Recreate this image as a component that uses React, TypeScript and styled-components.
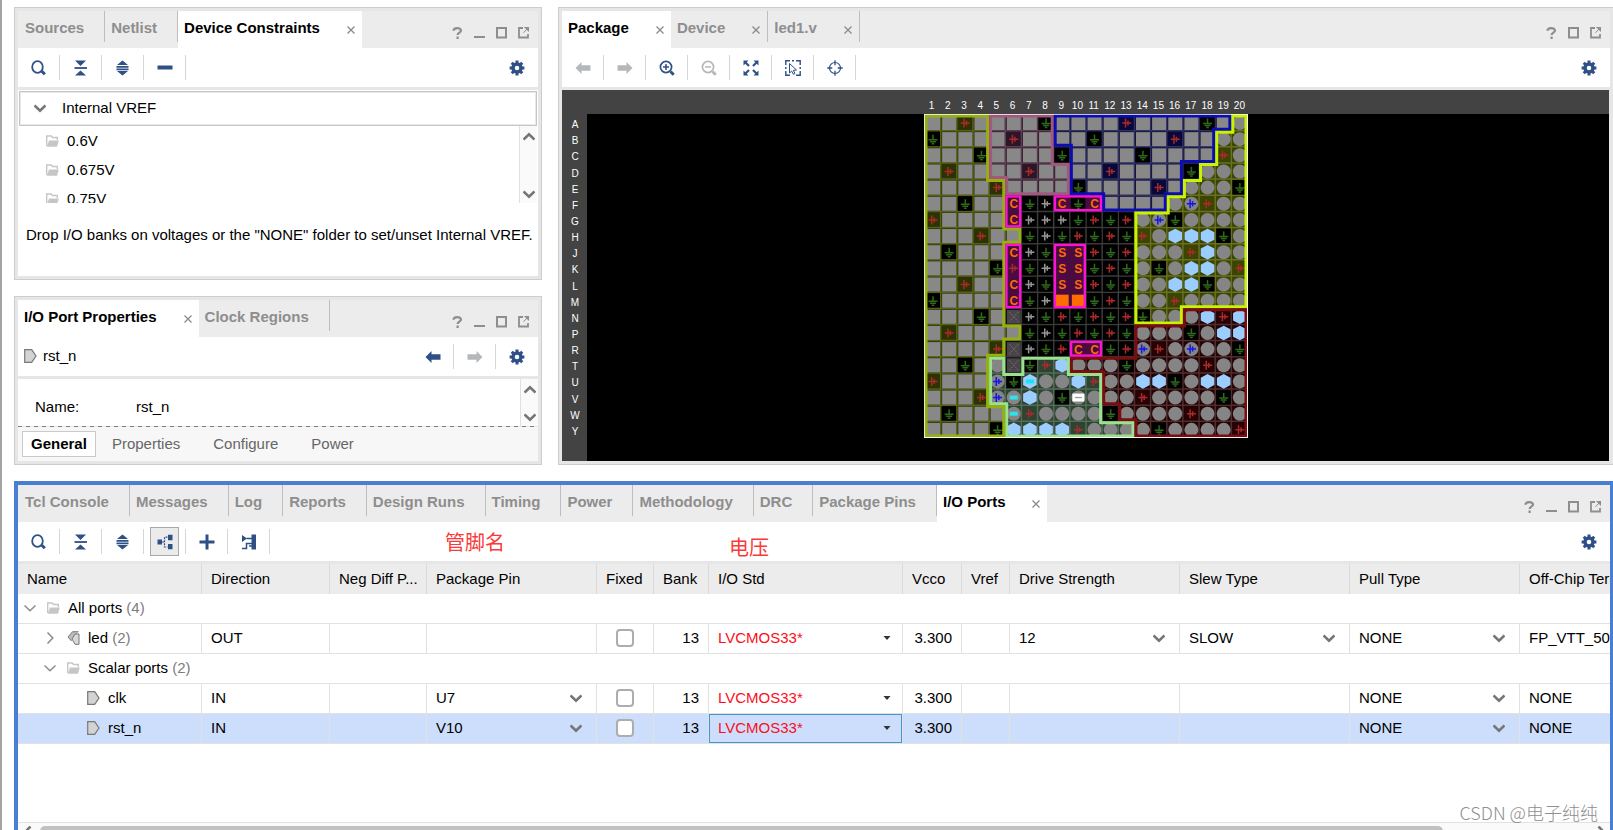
import React from "react";
import styled, { createGlobalStyle, css } from "styled-components";

const NAVY = "#2f4f87";
const GREY_ICON = "#b5b8bb";
const FONT = `"Liberation Sans", Arial, "Noto Sans CJK SC", sans-serif`;

const GlobalStyle = createGlobalStyle`
  *, *::before, *::after { box-sizing: border-box; }
  body {
    margin: 0;
    background: #fff;
    color: #000;
    font-family: ${FONT};
    font-size: 15px;
    line-height: 20px;
  }
  button, input, select {
    margin: 0;
    padding: 0;
    border: 0;
    background: none;
    color: inherit;
    font: inherit;
  }
  svg { display: block; flex: none; }
`;

/* ---------- page frame ---------- */

const Page = styled.main`
  height: 100vh;
  display: flex;
  flex-direction: column;
  gap: 16px;
  padding: 7px 0 0 12px;
  overflow: hidden;
  border-left: 2px solid #a3a3a3;
`;

const TopArea = styled.div`
  display: grid;
  grid-template-columns: minmax(480px, 528fr) 1055fr;
  gap: 16px;
`;

const LeftColumn = styled.div`
  display: flex;
  flex-direction: column;
  gap: 16px;
`;

const Panel = styled.section<{ $cut?: boolean }>`
  display: flex;
  flex-direction: column;
  min-width: 0;
  padding: 3px;
  border: 1px solid #cdcdcd;
  border-right-width: ${(p) => (p.$cut ? 0 : 1)}px;
  background: #e6e6e6;
`;

const ActivePanel = styled.section`
  position: relative;
  flex: 1;
  min-height: 0;
  display: flex;
  flex-direction: column;
  border: solid #4a7ed2;
  border-width: 4px 3px 0 4px;
  background: #fff;
`;

/* ---------- tab strip ---------- */

const Strip = styled.header`
  display: flex;
  align-items: flex-start;
  height: 37px;
  background: #ececec;
`;

const Tab = styled.div<{ $active?: boolean }>`
  display: flex;
  align-items: center;
  gap: 27px;
  height: 31px;
  padding: 2px 20px 0 6px;
  border-right: 1px solid #bdbdbd;
  color: #8e8e8e;
  &:first-child { padding-left: 7px; }
  ${(p) =>
    p.$active &&
    css`
      height: 37px;
      padding-bottom: 6px;
      border-right: 0;
      background: #fff;
      color: #000;
      &:first-child { padding-left: 6px; }
    `}
  &:has(button + button) {
    padding-right: 7px;
  }
`;

const TabLabel = styled.button`
  font-weight: bold;
  white-space: nowrap;
`;

const TabClose = styled.button`
  padding-top: 4px;
  color: #8a8a8a;
`;

const WindowControls = styled.div`
  display: flex;
  gap: 11px;
  margin: 16px 9px 0 auto;
  color: #8e8e8e;
`;

const ControlButton = styled.button`
  width: 11px;
  height: 12px;
`;

/* ---------- toolbars ---------- */

const Toolbar = styled.div`
  display: flex;
  align-items: center;
  height: 42px;
  border-bottom: 3px solid #e6e6e6;
  background: #fff;
`;

const ToolButton = styled.button<{ $last?: boolean }>`
  display: flex;
  align-items: center;
  justify-content: center;
  width: 42px;
  height: 25px;
  border-right: ${(p) => (p.$last ? 0 : 1)}px solid #d6d6d6;
`;

const PressedFace = styled.span`
  display: flex;
  flex: none;
  align-items: center;
  justify-content: center;
  width: 29px;
  height: 29px;
  border: 1px solid #a9a9a9;
  background: #ebebeb;
`;

const Spacer = styled.div`
  flex: 1;
`;

const ObjectName = styled.div`
  display: flex;
  align-items: center;
  gap: 6px;
  flex: 1;
  padding: 0 0 2px 6px;
`;

/* ---------- device constraints ---------- */

const ConstraintsBody = styled.div`
  height: 186px;
  padding: 1px;
  background: #fff;
`;

const VrefHeader = styled.button`
  display: flex;
  align-items: center;
  gap: 16px;
  width: 100%;
  height: 35px;
  padding: 0 14px 2px;
  border: 1px solid #c6c6c6;
  box-shadow: inset 0 0 0 1px #e9e9e9;
`;

const ScrollRow = styled.div<{ $height: number }>`
  display: flex;
  height: ${(p) => p.$height}px;
  overflow: hidden;
  background: #fff;
`;

const VoltageList = styled.ul`
  flex: 1;
  margin: 0;
  padding: 0;
  list-style: none;
`;

const VoltageItem = styled.li`
  display: flex;
  align-items: center;
  gap: 8px;
  height: 29px;
  padding-left: 27px;
`;

const ScrollGutter = styled.div`
  display: flex;
  flex-direction: column;
  align-items: center;
  justify-content: space-between;
  width: 18px;
  padding: 5px 0 3px;
  border-left: 1px solid #e0e0e0;
  background: #fafafa;
`;

const Hint = styled.p`
  margin: 22px 0 0;
  padding-left: 7px;
  white-space: nowrap;
`;

/* ---------- port properties ---------- */

const PropertyLine = styled.div`
  display: flex;
  flex: 1;
  align-items: center;
  padding: 9px 0 0 17px;
`;

const PropertyLabel = styled.span`
  width: 101px;
`;

const DashRule = styled.svg`
  width: 100%;
  height: 1px;
`;

const SubTabs = styled.div`
  display: flex;
  align-items: center;
  gap: 33px;
  height: 34px;
  padding-left: 4px;
  background: #f7f7f7;
  color: #666;
`;

const SubTab = styled.button<{ $active?: boolean }>`
  ${(p) =>
    p.$active &&
    css`
      height: 26px;
      margin-right: -17px;
      padding: 0 8px;
      border: 1px solid #c9c9c9;
      background: #fff;
      color: #000;
      font-weight: bold;
    `}
`;

/* ---------- package view ---------- */

const Canvas = styled.div`
  display: flex;
  flex: 1;
  flex-direction: column;
  margin-right: 1px;
  background: #434343;
  color: #fff;
`;

const ColumnRuler = styled.div`
  display: flex;
  justify-content: center;
  height: 24px;
  padding-top: 9px;
  font-size: 10px;
  line-height: 14px;
`;

const ColumnMarks = styled.div`
  display: grid;
  grid-template-columns: repeat(20, 1fr);
  width: 324px;
  text-align: center;
`;

const Stage = styled.div`
  display: flex;
  flex: 1;
`;

const RowRuler = styled.div`
  display: grid;
  grid-template-rows: repeat(20, 1fr);
  align-items: center;
  width: 25px;
  height: 326px;
  padding: 3px 0 0 1px;
  font-size: 10px;
  line-height: 12px;
  text-align: center;
`;

const Board = styled.div`
  display: flex;
  flex: 1;
  justify-content: center;
  padding-right: 25px;
  background: #000;
`;

/* ---------- port table ---------- */

const TableArea = styled.div`
  flex: 1;
  min-height: 0;
  overflow: hidden;
`;

const Table = styled.table`
  width: 100%;
  table-layout: fixed;
  border-collapse: separate;
  border-spacing: 0;
`;

const Th = styled.th`
  height: 30px;
  padding: 0 0 0 9px;
  overflow: hidden;
  border-right: 1px solid #dadada;
  background: #ececec;
  font-weight: normal;
  text-align: left;
  white-space: nowrap;
  &:last-child { border-right: 0; }
`;

const Tr = styled.tr<{ $selected?: boolean }>`
  background: ${(p) => (p.$selected ? "#cddefc" : "#fff")};
`;

const Td = styled.td<{ $align?: string; $focus?: boolean }>`
  height: 30px;
  padding: 0 ${(p) => (p.$align === "right" ? 9 : 0)}px 2px ${(p) => (p.$align ? 0 : 9)}px;
  overflow: hidden;
  border-right: 1px solid #e2e2e2;
  border-bottom: 1px solid #e2e2e2;
  text-align: ${(p) => p.$align ?? "left"};
  white-space: nowrap;
  ${(p) => p.$focus && css`box-shadow: inset 0 0 0 1px #4595d1;`}
  &:last-child { border-right: 0; }
`;

const TreeLabel = styled.div<{ $level: number; $leaf?: boolean }>`
  display: flex;
  align-items: center;
  margin-left: ${(p) => p.$level * 20 + (p.$leaf ? 20 : -3)}px;
  gap: 8px;
`;

const Twisty = styled.button`
  width: 12px;
  margin-right: 3px;
`;

const Count = styled.span`
  color: #7d7d7d;
`;

const Picker = styled.div<{ $arrow: number }>`
  display: grid;
  grid-template-columns: 1fr ${(p) => p.$arrow}px;
  align-items: center;
  svg {
    grid-area: 1 / 2;
    pointer-events: none;
  }
`;

const PickerSelect = styled.select<{ $red?: boolean }>`
  grid-area: 1 / 1 / 2 / 3;
  width: 100%;
  height: 20px;
  appearance: none;
  outline: none;
  color: ${(p) => (p.$red ? "#fb0d1b" : "#000")};
`;

const Check = styled.input`
  display: block;
  width: 18px;
  height: 18px;
  margin: 0 auto;
  appearance: none;
  border: 2px solid #adadad;
  border-radius: 4px;
  background: #fff;
`;

const HScroll = styled.div`
  display: flex;
  height: 8px;
  padding: 3px 3px 0 4px;
  overflow: hidden;
  border-top: 1px solid #e2e2e2;
  background: #fafafa;
`;

const Thumb = styled.div`
  flex: 1402;
  height: 12px;
  margin-left: 6px;
  border-radius: 5px;
  background: #c0c2c1;
`;

const ThumbRest = styled.div`
  flex: 152;
`;

const Note = styled.span<{ $left: number; $top: number }>`
  position: absolute;
  left: ${(p) => p.$left}px;
  top: ${(p) => p.$top}px;
  color: #fa3a3a;
  font-size: 20px;
  font-family: "Noto Sans CJK SC", sans-serif;
`;

const Watermark = styled.span`
  position: absolute;
  right: 12px;
  bottom: 8px;
  color: #8f8f8f;
  font-family: "Noto Sans CJK SC", sans-serif;
  font-size: 18px;
  font-weight: 300;
`;

/* ---------- icons ---------- */

const Svg = ({ size = 16, children }: { size?: number; children: React.ReactNode }) => (
  <svg width={size} height={size} viewBox={`0 0 ${size} ${size}`} fill="none" aria-hidden="true">
    {children}
  </svg>
);

const CloseIcon = () => (
  <Svg size={8}>
    <path d="M.5.5l7 7M7.5.5l-7 7" stroke="currentColor" strokeWidth="1.3" />
  </Svg>
);

const SearchIcon = () => (
  <Svg>
    <ellipse cx="6.500" cy="7" rx="5.300" ry="5.800" stroke={NAVY} strokeWidth="1.800" />
    <path d="M10.800 11.300l3 3" stroke={NAVY} strokeWidth="3" />
  </Svg>
);

const CollapseIcon = () => (
  <Svg>
    <path d="M2 .5h11L7.500 6zM2 15.500h11L7.500 10.500z" fill={NAVY} />
    <path d="M1.500 8H14" stroke={NAVY} strokeWidth="1.800" />
  </Svg>
);

const ExpandIcon = () => (
  <Svg>
    <path d="M7.500.5L13 5H2zM7.500 15.500L13 11H2z" fill={NAVY} />
    <path d="M1.500 6.800h12M1.500 9.300h12" stroke={NAVY} strokeWidth="1.700" />
  </Svg>
);

const MinusIcon = () => (
  <Svg>
    <path d="M.5 7.500h15" stroke={NAVY} strokeWidth="4" />
  </Svg>
);

const PlusIcon = () => (
  <Svg>
    <path d="M.5 8h15M8 .5v15" stroke={NAVY} strokeWidth="3" />
  </Svg>
);

const GearIcon = () => (
  <Svg>
    <circle cx="8" cy="8" r="4" stroke={NAVY} strokeWidth="3.400" />
    {[0, 45, 90, 135].map((a) => (
      <path key={a} d="M8 .6v3M8 12.400v3" stroke={NAVY} strokeWidth="3" transform={`rotate(${a} 8 8)`} />
    ))}
  </Svg>
);

const ArrowIcon = ({ right, color }: { right?: boolean; color: string }) => (
  <Svg>
    <path
      d="M.5 8L6.500 2v3.200h9v5.600h-9V14z"
      fill={color}
      transform={right ? "rotate(180 8 8)" : undefined}
    />
  </Svg>
);

const ZoomIcon = ({ plus, color }: { plus?: boolean; color: string }) => (
  <Svg>
    <circle cx="7" cy="7" r="5.600" stroke={color} strokeWidth="1.700" />
    <path d="M11.500 11.500l3.200 3.200" stroke={color} strokeWidth="3" />
    <path d={plus ? "M4 7h6M7 4v6" : "M4 7h6"} stroke={color} strokeWidth="1.500" />
  </Svg>
);

const FitIcon = () => (
  <Svg>
    {[0, 90, 180, 270].map((a) => (
      <g key={a} transform={`rotate(${a} 8 8)`}>
        <path d="M.5.5h5L.5 5.500z" fill={NAVY} />
        <path d="M2 2l4 4" stroke={NAVY} strokeWidth="2.200" />
      </g>
    ))}
  </Svg>
);

const SelectAreaIcon = () => (
  <Svg>
    <path
      d="M.8 5V.8H5M11 .8h4.200V5M15.200 11v4.200H11M5 15.200H.8V11M7 .8h2M.8 7v2M15.200 7v2"
      stroke={NAVY}
      strokeWidth="1.400"
    />
    <path d="M4.500 3.500l7 6.500-3.200.3 1.700 3.200-1.700.8-1.600-3.200-2.200 1.900z" stroke={NAVY} />
  </Svg>
);

const TargetIcon = () => (
  <Svg>
    <circle cx="8" cy="8" r="5.500" stroke={NAVY} strokeWidth="1.200" />
    <path d="M8 .3v5M8 10.700v5M.3 8h5M10.700 8h5" stroke={NAVY} strokeWidth="1.300" />
  </Svg>
);

const TreeIcon = () => (
  <Svg>
    <path d="M.5 5.500h4.500v5H.5zM11 .8h4.500v5.400H11zM11 10h4.500v5.200H11z" fill={NAVY} />
    <path d="M5 8h2.500M10.500 3.200h-3v9.800h3" stroke={NAVY} strokeWidth="1.200" strokeDasharray="2 1" />
  </Svg>
);

const PortsIcon = () => (
  <Svg>
    <path d="M1 1l5 3.500L1 8zM10.500.5H15v15h-4.500z" fill={NAVY} />
    <path d="M5.500 4.500H11M1 14.500h4.500v-5H11M8 12h3" stroke={NAVY} strokeWidth="1.500" />
  </Svg>
);

const FolderIcon = () => (
  <svg width="13" height="12" viewBox="0 0 13 12" fill="none" aria-hidden="true">
    <path d="M.7 11V1h4.500l1.300 1.500h4.800V5" stroke="#c6c6c6" strokeWidth="1.400" />
    <path d="M3 5.500h9.800L11 11.700H.8z" fill="#c6c6c6" />
  </svg>
);

const PortIcon = () => (
  <svg width="13" height="14" viewBox="0 0 13 14" aria-hidden="true">
    <path d="M.7.7h7L12 7l-4.300 6.300h-7z" fill="#d3d3d3" stroke="#787878" strokeWidth="1.200" />
  </svg>
);

const BusIcon = () => (
  <svg width="13" height="14" viewBox="0 0 13 14" aria-hidden="true">
    <path d="M11.500.7H5.500L1 6l3.500 4" fill="#bdbdbd" stroke="#787878" />
    <path d="M12 3H8L5 8l3 5.300h4z" fill="#d8d8d8" stroke="#787878" />
  </svg>
);

const Chevron = ({ turn = 0, thin, width = 12 }: { turn?: number; thin?: boolean; width?: number }) => (
  <svg width={width} height="12" viewBox="0 0 12 12" fill="none" aria-hidden="true">
    <path
      d="M.5 3.500L6 8.800l5.500-5.300"
      stroke={thin ? "#8b8b8b" : "#757575"}
      strokeWidth={thin ? 1.5 : 2.6}
      transform={`rotate(${turn} 6 6)`}
    />
  </svg>
);

const TinyTriangle = () => (
  <svg width="8" height="4" viewBox="0 0 8 4" aria-hidden="true">
    <path d="M.5 0h7L4 4z" fill="#333" />
  </svg>
);

const controlShapes: Record<string, React.ReactNode> = {
  Help: <path d="M1.500 3.800C1.500.5 9 .2 9 3.600c0 2-3.400 2-3.400 4.400M5.600 9.500V12" stroke="currentColor" strokeWidth="2.200" />,
  Minimize: <path d="M0 10h11" stroke="currentColor" strokeWidth="2" />,
  Maximize: <path d="M1 1h9v9.500H1z" stroke="currentColor" strokeWidth="2" />,
  Float: (
    <>
      <path d="M5 1H1v9.500h9V7" stroke="currentColor" strokeWidth="1.800" />
      <path d="M6.500 0H11v4.500zM9.500 1.500L5.500 5.800" fill="currentColor" stroke="currentColor" />
    </>
  ),
};

/* ---------- shared pieces ---------- */

interface TabInfo {
  label: string;
  active?: boolean;
  closable?: boolean;
}

const TabStrip = ({ tabs, controls }: { tabs: TabInfo[]; controls: string[] }) => (
  <Strip>
    {tabs.map((t) => (
      <Tab key={t.label} $active={t.active}>
        <TabLabel type="button">{t.label}</TabLabel>
        {t.closable && (
          <TabClose type="button" aria-label={`Close ${t.label}`}>
            <CloseIcon />
          </TabClose>
        )}
      </Tab>
    ))}
    <WindowControls>
      {controls.map((c) => (
        <ControlButton key={c} type="button" aria-label={c}>
          <svg width="11" height="12" viewBox="0 0 11 12" fill="none">
            {controlShapes[c]}
          </svg>
        </ControlButton>
      ))}
    </WindowControls>
  </Strip>
);

const Tool = ({ name, last, children }: { name: string; last?: boolean; children: React.ReactNode }) => (
  <ToolButton type="button" aria-label={name} $last={last}>
    {children}
  </ToolButton>
);

const Gutter = () => (
  <ScrollGutter>
    <Chevron turn={180} />
    <Chevron />
  </ScrollGutter>
);

const ALL_CONTROLS = ["Help", "Minimize", "Maximize", "Float"];

/* ---------- package drawing ---------- */

const ROW_NAMES = "ABCDEFGHJKLMNPRTUVWY".split("");
const PITCH = 16.15;

/* s square pad, o round pad, g ground, r/w/b supply, h hexagon, x unavailable,
   m/n assigned pad or hexagon, z selected pad, O/C/S configuration pins */
const PINS = [
  "ssrssssgssssrssssgso",
  "gssssrssssgssssrssoo",
  "sssgssssgssssgssssro",
  "srssssrssssrssssgooo",
  "ssssrssssgssssrsooog",
  "ssgssCgwCgCssssobroo",
  "rssssCwwwgrgrobgoooo",
  "sssrssgwgrgrgrohhhgo",
  "sgsssCwgSSrgrooorhoo",
  "ssssgrgwSSgrgogohhor",
  "ssrssCwgSSrgroohhgoo",
  "gssssCgwOOgrgooroooo",
  "sssgsxwgrgrgrgooohrh",
  "srssssgwgrgrgooogohh",
  "ssssrxwgrCCgrbroboog",
  "ssgsoxgrhooogooooroo",
  "rsssbgnoohroohhgohho",
  "sssrbmhogzoooroooogo",
  "sgsssmroooogoooorooo",
  "ssssghhhhroooogoooor",
];

interface Region {
  id: string;
  line: string;
  fill: string;
  grid: string;
  path: string;
}

const REGIONS: Region[] = [
  { id: "olive", line: "#98b00f", fill: "#2d3300", grid: "#55601a", path: "0,0 4,0 4,4 5,4 5,7 6,7 6,8 5,8 5,13 6,13 6,14 5,14 5,15 4,15 4,18 5,18 5,20 0,20" },
  { id: "mauve", line: "#a1587f", fill: "#2c1527", grid: "#5c3c50", path: "4,0 8,0 8,3 9,3 9,5 5,5 5,4 4,4" },
  { id: "blue", line: "#0c0cb4", fill: "#08083a", grid: "#30305f", path: "8,0 19,0 19,1 18,1 18,3 16,3 16,5 15,5 15,6 11,6 11,5 9,5 9,2 8,2" },
  { id: "lime", line: "#c8f400", fill: "#3b4500", grid: "#687026", path: "19,0 20,0 20,12 16,12 16,13 13,13 13,6 15,6 15,5 16,5 16,4 17,4 17,3 18,3 18,1 19,1" },
  { id: "red", line: "#7b0d10", fill: "#260204", grid: "#4c3030", path: "16,12 20,12 20,20 13,20 13,19 12,19 12,18 11,18 11,16 9,16 9,15 13,15 13,13 16,13" },
  { id: "green", line: "#9be28d", fill: "#2d4433", grid: "#566b58", path: "4,15 5,15 5,16 6,16 6,15 9,15 9,16 11,16 11,19 13,19 13,20 5,20 5,18 4,18" },
];

const CONFIG_BOXES = [
  [5, 5, 1, 2],
  [8, 5, 3, 1],
  [5, 8, 1, 4],
  [8, 8, 2, 4],
  [9, 14, 2, 1],
];

const toPoints = (path: string) =>
  path
    .split(" ")
    .map((p) => p.split(",").map((n) => Number(n) * PITCH).join(","))
    .join(" ");

const Supply = ({ color }: { color: string }) => (
  <path d="M4 8.500h9M7.200 4v9M9.700 6v5" stroke={color} strokeWidth="1.500" fill="none" />
);

const Pad = () => <circle cx="8.500" cy="8.500" r="7" fill="#858585" />;
const Hexagon = () => <path d="M8.500 1.200l6.800 3.600v7.400l-6.800 3.600-6.800-3.600V4.800z" fill="#9bcdff" />;

const Pin = ({ kind }: { kind: string }) => {
  switch (kind) {
    case "s":
      return <rect x="1.500" y="1.500" width="14" height="14" fill="#888" />;
    case "o":
      return <Pad />;
    case "h":
      return <Hexagon />;
    case "g":
      return (
        <>
          <rect x="1" y="1" width="14.500" height="14.500" fill="#000" />
          <path d="M8.500 4v5M4 9h9M5.500 11h6M7.200 13h2.600" stroke="#2f6a1c" strokeWidth="1.500" />
        </>
      );
    case "r":
      return <Supply color="#a92a2c" />;
    case "w":
      return <Supply color="#969696" />;
    case "b":
      return (
        <>
          <Pad />
          <Supply color="#1414ee" />
        </>
      );
    case "m":
      return (
        <>
          <Pad />
          <rect x="4.500" y="6.500" width="8" height="4" fill="#2fe2ee" />
        </>
      );
    case "n":
      return (
        <>
          <Hexagon />
          <rect x="4.500" y="6.500" width="8" height="4" fill="#12e8f4" />
        </>
      );
    case "z":
      return (
        <>
          <Pad />
          <rect x="2.500" y="4.500" width="12" height="8" fill="#fff" />
          <path d="M5 8.500h7" stroke="#999" strokeWidth="1.300" />
        </>
      );
    case "x":
      return (
        <>
          <rect x="1.500" y="1.500" width="14" height="14" fill="#484448" />
          <path d="M4 3.500l9 10M13 3.500l-9 10" stroke="#7a6877" strokeDasharray="2 1" />
        </>
      );
    case "O":
      return <rect x="2" y="2.500" width="13" height="12" fill="#ff6c00" />;
    default:
      return (
        <text x="8.500" y="13" textAnchor="middle" fontSize="12" fontWeight="bold" fill="#ff6a08">
          {kind}
        </text>
      );
  }
};

const GRID_LINES = Array.from({ length: 21 }, (_, i) => {
  const p = (i * PITCH).toFixed(2);
  return `M${p} 0V323M0 ${p}H323`;
}).join("");

const ChipDrawing = () => (
  <svg width="324" height="324" viewBox="-.5 -.5 324 324" role="img" aria-label="Package pins" fontFamily={FONT}>
    <defs>
      {REGIONS.map((r) => (
        <clipPath key={r.id} id={`clip-${r.id}`}>
          <polygon points={toPoints(r.path)} />
        </clipPath>
      ))}
    </defs>
    <path d={GRID_LINES} stroke="#3b3b3b" strokeWidth="1.500" />
    {REGIONS.map((r) => (
      <g key={r.id} clipPath={`url(#clip-${r.id})`}>
        <polygon points={toPoints(r.path)} fill={r.fill} />
        <path d={GRID_LINES} stroke={r.grid} strokeWidth="1.500" />
      </g>
    ))}
    {CONFIG_BOXES.map(([x, y, w, h]) => (
      <rect key={`${x}-${y}`} x={x * PITCH} y={y * PITCH} width={w * PITCH} height={h * PITCH} fill="#4b0a40" />
    ))}
    {PINS.map((line, row) =>
      line.split("").map((kind, col) => (
        <g key={`${row}-${col}`} transform={`translate(${col * PITCH} ${row * PITCH})`}>
          <Pin kind={kind} />
        </g>
      ))
    )}
    <rect x="0" y="0" width="323" height="323" fill="none" stroke="#fff" />
    {REGIONS.map((r) => (
      <polygon
        key={r.id}
        points={toPoints(r.path)}
        clipPath={`url(#clip-${r.id})`}
        fill="none"
        stroke={r.line}
        strokeWidth="6"
      />
    ))}
    {CONFIG_BOXES.map(([x, y, w, h]) => (
      <rect
        key={`${x}-${y}`}
        x={x * PITCH + 1.2}
        y={y * PITCH + 1.2}
        width={w * PITCH - 2.4}
        height={h * PITCH - 2.4}
        fill="none"
        stroke="#fb12d2"
        strokeWidth="2.400"
      />
    ))}
    <path d="M0 323.200H323.200V0" fill="none" stroke="#fff" />
  </svg>
);

/* ---------- port table data ---------- */

const COLUMNS: [string, number | undefined][] = [
  ["Name", 184],
  ["Direction", 128],
  ["Neg Diff P...", 97],
  ["Package Pin", 170],
  ["Fixed", 57],
  ["Bank", 55],
  ["I/O Std", 194],
  ["Vcco", 59],
  ["Vref", 48],
  ["Drive Strength", 170],
  ["Slew Type", 170],
  ["Pull Type", 170],
  ["Off-Chip Termination", undefined],
];

interface Port {
  name: string;
  count?: number;
  direction: string;
  pin?: string;
  drive?: string;
  slew?: string;
  termination: string;
  selected?: boolean;
}

const Choice = ({ label, value, red }: { label: string; value?: string; red?: boolean }) =>
  value ? (
    <Picker $arrow={red ? 19 : 26}>
      <PickerSelect aria-label={label} defaultValue={value} $red={red}>
        <option>{value}</option>
      </PickerSelect>
      {red ? <TinyTriangle /> : <Chevron />}
    </Picker>
  ) : null;

const PortRow = ({ port }: { port: Port }) => (
  <Tr $selected={port.selected}>
    <Td>
      {port.count ? (
        <TreeLabel $level={1}>
          <Twisty type="button" aria-label={`Expand ${port.name}`}>
            <Chevron thin turn={-90} />
          </Twisty>
          <BusIcon />
          <span>
            {port.name} <Count>({port.count})</Count>
          </span>
        </TreeLabel>
      ) : (
        <TreeLabel $level={2} $leaf>
          <PortIcon />
          {port.name}
        </TreeLabel>
      )}
    </Td>
    <Td>{port.direction}</Td>
    <Td />
    <Td>
      <Choice label={`${port.name} package pin`} value={port.pin} />
    </Td>
    <Td $align="center">
      <Check type="checkbox" aria-label={`${port.name} fixed`} />
    </Td>
    <Td $align="right">13</Td>
    <Td $focus={port.selected}>
      <Choice label={`${port.name} I/O standard`} value="LVCMOS33*" red />
    </Td>
    <Td $align="right">3.300</Td>
    <Td />
    <Td>
      <Choice label={`${port.name} drive strength`} value={port.drive} />
    </Td>
    <Td>
      <Choice label={`${port.name} slew type`} value={port.slew} />
    </Td>
    <Td>
      <Choice label={`${port.name} pull type`} value="NONE" />
    </Td>
    <Td>{port.termination}</Td>
  </Tr>
);

const GroupRow = ({ name, count, level }: { name: string; count: number; level: number }) => (
  <Tr>
    <Td colSpan={13}>
      <TreeLabel $level={level}>
        <Twisty type="button" aria-label={`Collapse ${name}`}>
          <Chevron thin />
        </Twisty>
        <FolderIcon />
        <span>
          {name} <Count>({count})</Count>
        </span>
      </TreeLabel>
    </Td>
  </Tr>
);

/* ---------- panels ---------- */

const ConstraintsPanel = () => (
  <Panel>
    <TabStrip
      tabs={[
        { label: "Sources" },
        { label: "Netlist" },
        { label: "Device Constraints", active: true, closable: true },
      ]}
      controls={ALL_CONTROLS}
    />
    <Toolbar>
      <Tool name="Search"><SearchIcon /></Tool>
      <Tool name="Collapse all"><CollapseIcon /></Tool>
      <Tool name="Expand all"><ExpandIcon /></Tool>
      <Tool name="Remove"><MinusIcon /></Tool>
      <Spacer />
      <Tool name="Settings" last><GearIcon /></Tool>
    </Toolbar>
    <ConstraintsBody>
      <VrefHeader type="button">
        <Chevron />
        Internal VREF
      </VrefHeader>
      <ScrollRow $height={77}>
        <VoltageList>
          {["0.6V", "0.675V", "0.75V"].map((v) => (
            <VoltageItem key={v}>
              <FolderIcon />
              {v}
            </VoltageItem>
          ))}
        </VoltageList>
        <Gutter />
      </ScrollRow>
      <Hint>Drop I/O banks on voltages or the "NONE" folder to set/unset Internal VREF.</Hint>
    </ConstraintsBody>
  </Panel>
);

const PropertiesPanel = () => (
  <Panel>
    <TabStrip
      tabs={[
        { label: "I/O Port Properties", active: true, closable: true },
        { label: "Clock Regions" },
      ]}
      controls={ALL_CONTROLS}
    />
    <Toolbar>
      <ObjectName>
        <PortIcon />
        rst_n
      </ObjectName>
      <Tool name="Back"><ArrowIcon color={NAVY} /></Tool>
      <Tool name="Forward"><ArrowIcon right color={GREY_ICON} /></Tool>
      <Tool name="Settings" last><GearIcon /></Tool>
    </Toolbar>
    <ScrollRow $height={47}>
      <PropertyLine>
        <PropertyLabel>Name:</PropertyLabel>
        <span>rst_n</span>
      </PropertyLine>
      <Gutter />
    </ScrollRow>
    <DashRule>
      <path d="M0 .5h3000" stroke="#7f7f7f" strokeDasharray="4 4" />
    </DashRule>
    <SubTabs>
      <SubTab type="button" $active>General</SubTab>
      <SubTab type="button">Properties</SubTab>
      <SubTab type="button">Configure</SubTab>
      <SubTab type="button">Power</SubTab>
    </SubTabs>
  </Panel>
);

const PackagePanel = () => (
  <Panel $cut>
    <TabStrip
      tabs={[
        { label: "Package", active: true, closable: true },
        { label: "Device", closable: true },
        { label: "led1.v", closable: true },
      ]}
      controls={["Help", "Maximize", "Float"]}
    />
    <Toolbar>
      <Tool name="Back"><ArrowIcon color={GREY_ICON} /></Tool>
      <Tool name="Forward"><ArrowIcon right color={GREY_ICON} /></Tool>
      <Tool name="Zoom in"><ZoomIcon plus color={NAVY} /></Tool>
      <Tool name="Zoom out"><ZoomIcon color={GREY_ICON} /></Tool>
      <Tool name="Zoom fit"><FitIcon /></Tool>
      <Tool name="Select area"><SelectAreaIcon /></Tool>
      <Tool name="Autofit selection"><TargetIcon /></Tool>
      <Spacer />
      <Tool name="Settings" last><GearIcon /></Tool>
    </Toolbar>
    <Canvas>
      <ColumnRuler>
        <ColumnMarks>
          {ROW_NAMES.map((r, i) => (
            <span key={r}>{i + 1}</span>
          ))}
        </ColumnMarks>
      </ColumnRuler>
      <Stage>
        <RowRuler>
          {ROW_NAMES.map((r) => (
            <span key={r}>{r}</span>
          ))}
        </RowRuler>
        <Board>
          <ChipDrawing />
        </Board>
      </Stage>
    </Canvas>
  </Panel>
);

const PortsPanel = () => (
  <ActivePanel>
    <TabStrip
      tabs={[
        { label: "Tcl Console" },
        { label: "Messages" },
        { label: "Log" },
        { label: "Reports" },
        { label: "Design Runs" },
        { label: "Timing" },
        { label: "Power" },
        { label: "Methodology" },
        { label: "DRC" },
        { label: "Package Pins" },
        { label: "I/O Ports", active: true, closable: true },
      ]}
      controls={ALL_CONTROLS}
    />
    <Toolbar>
      <Tool name="Search"><SearchIcon /></Tool>
      <Tool name="Collapse all"><CollapseIcon /></Tool>
      <Tool name="Expand all"><ExpandIcon /></Tool>
      <Tool name="Group by interface">
        <PressedFace><TreeIcon /></PressedFace>
      </Tool>
      <Tool name="Create port"><PlusIcon /></Tool>
      <Tool name="Schematic"><PortsIcon /></Tool>
      <Spacer />
      <Tool name="Settings" last><GearIcon /></Tool>
    </Toolbar>
    <Note $left={427} $top={47}>管脚名</Note>
    <Note $left={711} $top={52}>电压</Note>
    <TableArea>
      <Table>
        <colgroup>
          {COLUMNS.map(([name, width]) => (
            <col key={name} width={width} />
          ))}
        </colgroup>
        <thead>
          <tr>
            {COLUMNS.map(([name]) => (
              <Th key={name} scope="col">{name}</Th>
            ))}
          </tr>
        </thead>
        <tbody>
          <GroupRow name="All ports" count={4} level={0} />
          <PortRow port={{ name: "led", count: 2, direction: "OUT", drive: "12", slew: "SLOW", termination: "FP_VTT_50" }} />
          <GroupRow name="Scalar ports" count={2} level={1} />
          <PortRow port={{ name: "clk", direction: "IN", pin: "U7", termination: "NONE" }} />
          <PortRow port={{ name: "rst_n", direction: "IN", pin: "V10", termination: "NONE", selected: true }} />
        </tbody>
      </Table>
    </TableArea>
    <HScroll>
      <Chevron turn={90} />
      <Thumb />
      <ThumbRest />
      <Chevron turn={-90} />
    </HScroll>
    <Watermark>CSDN @电子纯纯</Watermark>
  </ActivePanel>
);

export default function App() {
  return (
    <>
      <GlobalStyle />
      <Page>
        <TopArea>
          <LeftColumn>
            <ConstraintsPanel />
            <PropertiesPanel />
          </LeftColumn>
          <PackagePanel />
        </TopArea>
        <PortsPanel />
      </Page>
    </>
  );
}
